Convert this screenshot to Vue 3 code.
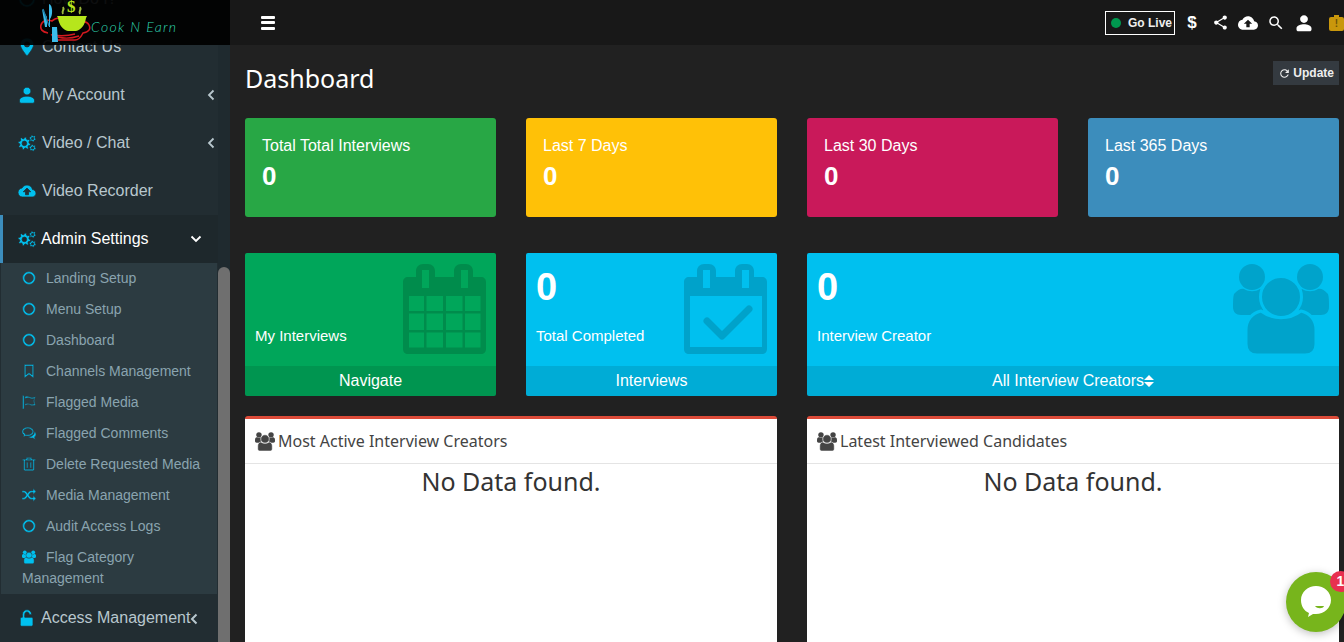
<template>
  <div class="page">
    <svg class="defs" width="0" height="0">
      <symbol id="users" viewBox="0 0 96 90">
        <circle cx="19" cy="13" r="13" stroke="none" />
        <circle cx="77" cy="13" r="13" stroke="none" />
        <path stroke="none" d="M1 30c4-5 8-6 10-5 5 3 11 3 16 0l8 2-6 24H8c-5 0-8-3-8-8 0-5 0-10 1-13z" />
        <path stroke="none" d="M95 30c-4-5-8-6-10-5-5 3-11 3-16 0l-8 2 6 24h21c5 0 8-3 8-8 0-5 0-10-1-13z" />
        <circle cx="48" cy="33" r="20.5" stroke-width="3" />
        <path stroke-width="3" d="M13 80V66c0-10 6-17 15-19 12 9 28 9 40 0 9 2 15 9 15 19v14c0 7-4 11-11 11H24c-7 0-11-4-11-11z" />
      </symbol>
    </svg>

    <aside class="sidebar">
      <div class="logo">
        <svg class="logo-art" width="52" height="45" viewBox="0 0 52 45">
          <path d="M8 33c-6-1-8-4-7-8s6-6 11-4c2-2 5-3 8-3M34 23c5-3 13-2 15 2s0 7-6 8c-2 4-5 7-8 7H18c-3 0-5-3-6-5 7 1 16 1 23-1" fill="none" stroke="#d3191f" stroke-width="1.6" />
          <path d="M18 37c7 2 15 1 21-1" fill="none" stroke="#d3191f" stroke-width="1.4" />
          <path d="M17 16h30l-1 2c-1 7-5 12-10 13h-8c-5-1-9-6-10-13z" fill="#b6e61c" />
          <text x="27" y="12" font-family="Liberation Serif, serif" font-size="17" font-weight="700" fill="#b6e61c">$</text>
          <path d="M23 14c-2-3 2-4 0-7M40 14c-2-3 2-4 0-7" fill="none" stroke="#9bb83a" stroke-width="2" />
          <path d="M2 9l5 8v10h-2zM9 4c4 1 4 12 1 15v8h-1zM12 27h5l1 15h-6z" fill="#3bbcea" />
          <path d="M3 9l6 17" stroke="#1d7fa8" stroke-width="1.4" />
        </svg>
        <span class="logo-text">Cook N Earn</span>
      </div>
      <nav class="nav">
        <div v-for="item in topMenu" :key="item.label" class="nav-item" :class="{ active: item.active }">
          <svg v-if="item.users" class="nav-icon"><use href="#users" /></svg>
          <svg v-else class="nav-icon" viewBox="0 0 24 24"><path :d="icons[item.icon]" fill-rule="evenodd" /></svg>
          <span>{{ item.label }}</span>
          <svg v-if="item.arrow === 'left'" class="chev" width="8" height="12" viewBox="0 0 8 12"><path d="M6.5 1.5L2 6l4.5 4.5" /></svg>
          <svg v-if="item.arrow === 'down'" class="chev down" width="12" height="8" viewBox="0 0 12 8"><path d="M1.5 1.5L6 6l4.5-4.5" /></svg>
        </div>
        <ul class="sub">
          <li v-for="s in subMenu" :key="s.label" class="sub-item">
            <svg v-if="s.icon === 'users'" class="sub-icon solid"><use href="#users" /></svg>
            <svg v-else class="sub-icon" :class="{ solid: s.solid }" viewBox="0 0 24 24"><path :d="icons[s.icon]" fill-rule="evenodd" /></svg>{{ s.label }}
          </li>
        </ul>
        <div class="nav-item access">
          <svg class="nav-icon" viewBox="0 0 24 24"><path :d="icons.unlock" /></svg>
          <span>Access Management</span>
          <svg class="chev after" width="8" height="12" viewBox="0 0 8 12"><path d="M6.5 1.5L2 6l4.5 4.5" /></svg>
        </div>
      </nav>
      <div class="scrollbar"><div class="thumb"></div></div>
    </aside>

    <main class="main">
      <header class="topbar">
        <button class="burger"><span></span><span></span><span></span></button>
        <div class="top-right">
          <div class="go-live"><i class="dot"></i>Go Live</div>
          <div class="top-icon dollar">$</div>
          <div class="top-icon"><svg width="17" height="17" viewBox="0 0 24 24"><path :d="icons.share" /></svg></div>
          <div class="top-icon"><svg width="20" height="20" viewBox="0 0 24 24"><path :d="icons.cloud" fill-rule="evenodd" /></svg></div>
          <div class="top-icon"><svg width="18" height="18" viewBox="0 0 24 24"><path :d="icons.search" /></svg></div>
          <div class="top-icon"><svg width="18" height="18" viewBox="0 0 24 24"><path :d="icons.person" /></svg></div>
          <div class="amber"><i>!</i></div>
        </div>
      </header>

      <section class="content">
        <div class="title-row">
          <h1>Dashboard</h1>
          <button class="update">
            <svg width="13" height="13" viewBox="0 0 24 24"><path :d="icons.refresh" /></svg>Update
          </button>
        </div>

        <div class="stats">
          <div v-for="c in stats" :key="c.label" class="stat" :style="{ background: c.color }">
            <div class="stat-label">{{ c.label }}</div>
            <div class="stat-num">0</div>
          </div>
        </div>

        <div class="boxes">
          <div class="box green">
            <div class="box-body">
              <h3 class="empty">&nbsp;</h3>
              <p>My Interviews</p>
              <svg class="ghost cal" width="84" height="90" viewBox="0 0 84 90"><path :d="calendarGrid" fill-rule="evenodd" /></svg>
            </div>
            <div class="box-foot">Navigate</div>
          </div>
          <div class="box blue">
            <div class="box-body">
              <h3>0</h3>
              <p>Total Completed</p>
              <svg class="ghost cal" width="84" height="90" viewBox="0 0 84 90">
                <path :d="calendarBlank" fill-rule="evenodd" />
                <path d="M23 57l15 15 27-27" fill="none" stroke="#000" stroke-width="7" stroke-linecap="round" stroke-linejoin="round" />
              </svg>
            </div>
            <div class="box-foot">Interviews</div>
          </div>
          <div class="box blue wide">
            <div class="box-body">
              <h3>0</h3>
              <p>Interview Creator</p>
              <svg class="ghost-users"><use href="#users" /></svg>
            </div>
            <div class="box-foot">All Interview Creators<svg class="sort" width="10" height="14" viewBox="0 0 10 14"><path d="M5 1l5 5H0zM0 8h10l-5 5z" /></svg></div>
          </div>
        </div>

        <div class="panels">
          <div v-for="p in panels" :key="p" class="panel">
            <div class="panel-head"><svg class="head-icon"><use href="#users" /></svg>{{ p }}</div>
            <div class="panel-body">No Data found.</div>
          </div>
        </div>
      </section>
    </main>

    <div class="chat">
      <svg width="32" height="34" viewBox="0 0 32 34">
        <path d="M16 1c8 0 15 6 15 14s-7 14-15 14c-1 0-2 0-3 0l-5 3 1-4C4 26 1 21 1 15 1 7 8 1 16 1z" fill="#fff" />
        <path d="M15 21h9c-1 3-7 3-9 0z" fill="#77b51c" />
      </svg>
      <span class="badge">1</span>
    </div>
  </div>
</template>

<script setup>
// builds a gear outline as one closed path, with a round hole in the middle
const gear = (cx, cy, r, teeth) => {
  const pts = []
  const n = teeth * 4
  for (let i = 0; i < n; i++) {
    const a = ((i + 0.5) / n) * Math.PI * 2
    const rad = i % 4 < 2 ? r : r * 0.74
    pts.push(`${(cx + Math.cos(a) * rad).toFixed(2)} ${(cy + Math.sin(a) * rad).toFixed(2)}`)
  }
  const h = r * 0.36
  return `M${pts.join('L')}zM${cx - h} ${cy}a${h} ${h} 0 1 0 ${h * 2} 0a${h} ${h} 0 1 0 ${-h * 2} 0z`
}

const cog = gear(8.5, 12.5, 8.5, 8) + gear(19.5, 6, 4.6, 6) + gear(19.5, 18.5, 4.6, 6)

const icons = {
  cog,
  person: 'M12 12c2.9 0 5.2-2.3 5.2-5.2S14.900 1.600 12 1.600 6.800 3.900 6.800 6.800 9.100 12 12 12zm0 1.500c-4 0-10 1.600-10 5.500v1.500c0 1.500 1 2.500 2.500 2.500h15c1.500 0 2.500-1 2.500-2.500V19c0-3.900-6-5.500-10-5.500z',
  pin: 'M12 0C6.500 0 3 4 3 8.500 3 14 12 24 12 24s9-10 9-15.500C21 4 17.500 0 12 0zm0 12a3.500 3.500 0 1 1 0-7 3.500 3.500 0 0 1 0 7z',
  cloud: 'M19.350 10.040C18.670 6.590 15.640 4 12 4 9.110 4 6.600 5.640 5.350 8.040 2.340 8.360 0 10.910 0 14c0 3.310 2.690 6 6 6h13c2.760 0 5-2.240 5-5 0-2.640-2.050-4.780-4.650-4.960zM14 13v4h-4v-4H7l5-5 5 5h-3z',
  share: 'M18 16.080c-.760 0-1.440.300-1.960.770L8.910 12.700c.050-.230.090-.460.090-.700s-.040-.470-.090-.700l7.050-4.110c.540.500 1.250.810 2.040.810 1.660 0 3-1.340 3-3s-1.340-3-3-3-3 1.340-3 3c0 .240.040.470.090.700L8.040 9.810C7.500 9.310 6.790 9 6 9c-1.660 0-3 1.340-3 3s1.340 3 3 3c.790 0 1.500-.310 2.040-.810l7.120 4.160c-.050.210-.080.430-.080.650 0 1.610 1.310 2.920 2.920 2.920 1.610 0 2.920-1.310 2.920-2.920s-1.310-2.920-2.920-2.920z',
  search: 'M15.500 14h-.790l-.280-.270C15.410 12.590 16 11.110 16 9.500 16 5.910 13.090 3 9.500 3S3 5.910 3 9.500 5.910 16 9.500 16c1.610 0 3.090-.590 4.230-1.570l.270.280v.790l5 4.990L20.490 19l-4.990-5zm-6 0C7.010 14 5 11.990 5 9.500S7.010 5 9.500 5 14 7.010 14 9.500 11.990 14 9.500 14z',
  refresh: 'M17.650 6.350C16.200 4.900 14.210 4 12 4c-4.420 0-7.990 3.580-7.990 8s3.570 8 7.990 8c3.730 0 6.840-2.550 7.730-6h-2.080c-.820 2.330-3.040 4-5.650 4-3.310 0-6-2.690-6-6s2.690-6 6-6c1.660 0 3.140.690 4.220 1.780L13 11h7V4l-2.350 2.350z',
  unlock: 'M18 11H9V7.500C9 5.600 10.300 4 12 4s3 1.600 3 3.500h3.200C18.200 3.800 15.500 1 12 1S5.800 3.800 5.800 7.500V11H5c-1 0-2 1-2 2v8c0 1 1 2 2 2h13c1 0 2-1 2-2v-8c0-1-1-2-2-2z',
  ring: 'M12 1a11 11 0 1 0 0 22 11 11 0 0 0 0-22zm0 3.500a7.500 7.500 0 1 1 0 15 7.500 7.500 0 0 1 0-15z',
  bookmark: 'M4 1h16v23l-8-6-8 6zm2.500 2.500v15.500l5.500-4 5.500 4V3.500z',
  flag: 'M1 1h2.500v23H1zM5 3c4-2 7 0 10 1s5 0 8-1l-2 7 2 7c-4 2-6 1-9 0s-5-1-9 1v-2.500c4-1.500 6-1 9 0s4 1 7 0l-1.500-5.500L21 6c-3 1-5 .500-7-.500s-5-1-9 .500z',
  comments: 'M10 2C4.500 2 0 5.300 0 9.500c0 2.400 1.500 4.500 3.500 6L2 19l4.500-2.200c1 .200 2.300.400 3.500.400 5.500 0 10-3.400 10-7.700S15.500 2 10 2zm0 2.200c4.500 0 7.800 2.500 7.800 5.300S14.500 15 10 15c-1.200 0-2.500-.200-3.700-.600l-1 .500.500-1.400C3.500 12.400 2.200 11 2.200 9.500 2.200 6.700 5.500 4.200 10 4.200zM21 9.500c2 1.300 3 3 3 5 0 1.700-1 3.300-2.500 4.400L23 23l-4.500-2.500c-3 .500-6-.300-8-2 4.500.200 11.500-2 10.500-9z',
  trash: 'M8 1h8l1 3h6v2.200h-2V21c0 1.500-1 2.500-2.500 2.500h-13C4 23.500 3 22.500 3 21V6.200H1V4h6zm1.200 3h5.600l-.400-1H9.600zM5.200 6.200V21h13.600V6.200zM8 9h2v10H8zm6 0h2v10h-2z',
  random: 'M19 1l5 5-5 5V7.500h-2.500c-1.500 0-2.500.800-3.500 2.200l-1.300 2.300 1.300 2.300c1 1.400 2 2.200 3.500 2.200H19V13l5 5-5 5v-3.500h-2.500c-3 0-4.800-1.400-6.300-3.600l-.700-1.200-.700 1.200c-1.500 2.200-3.300 3.600-6.300 3.600H0v-3h2.500c1.500 0 2.500-.800 3.500-2.200L7.300 12 6 9.700C5 8.300 4 7.500 2.500 7.500H0v-3h2.500c3 0 4.800 1.400 6.300 3.600l.700 1.200.700-1.200c1.500-2.200 3.300-3.600 6.300-3.600H19z'
}

const topMenu = [
  { label: 'How Do I?', icon: 'ring' },
  { label: 'Contact Us', icon: 'pin' },
  { label: 'My Account', icon: 'person', arrow: 'left' },
  { label: 'Video / Chat', icon: 'cog', arrow: 'left' },
  { label: 'Video Recorder', icon: 'cloud' },
  { label: 'Admin Settings', icon: 'cog', arrow: 'down', active: true }
]

const subMenu = [
  { label: 'Landing Setup', icon: 'ring' },
  { label: 'Menu Setup', icon: 'ring' },
  { label: 'Dashboard', icon: 'ring' },
  { label: 'Channels Management', icon: 'bookmark' },
  { label: 'Flagged Media', icon: 'flag' },
  { label: 'Flagged Comments', icon: 'comments' },
  { label: 'Delete Requested Media', icon: 'trash' },
  { label: 'Media Management', icon: 'random' },
  { label: 'Audit Access Logs', icon: 'ring' },
  { label: 'Flag Category Management', icon: 'users' }
]

const stats = [
  { label: 'Total Total Interviews', color: '#28a745' },
  { label: 'Last 7 Days', color: '#ffc107' },
  { label: 'Last 30 Days', color: '#c9195a' },
  { label: 'Last 365 Days', color: '#3c8dbc' }
]

const panels = ['Most Active Interview Creators', 'Latest Interviewed Candidates']

// calendar outline shared by the two ghost icons
const rect = (x, y, w, h) => `M${x} ${y}h${w}v${h}h${-w}z`
const calendarFrame =
  'M5 13h8V7c0-4 3-7 7-7h5c4 0 7 3 7 7v6h19V7c0-4 3-7 7-7h5c4 0 7 3 7 7v6h8c3 0 5 2 5 5v67c0 3-2 5-5 5H5c-3 0-5-2-5-5V18c0-3 2-5 5-5z' +
  rect(19, 6, 7, 18) + rect(58, 6, 7, 18)

const calendarBlank = calendarFrame + rect(6, 32, 72, 51)

const cols = [[6, 15], [23.5, 16.5], [43, 16.5], [62, 15.5]]
const rows = [[32, 15], [49.5, 16.5], [68.500, 15]]
const calendarGrid =
  calendarFrame + rows.map(([y, h]) => cols.map(([x, w]) => rect(x, y, w, h)).join('')).join('')
</script>

<style scoped>
.page {
  position: relative;
  display: flex;
  width: 1344px;
  height: 642px;
  overflow: hidden;
  font-family: "Liberation Sans", Arial, sans-serif;
  background: #212121;
}

.defs {
  position: absolute;
}

/* sidebar */
.sidebar {
  position: relative;
  display: flex;
  flex: 0 0 230px;
  overflow: hidden;
  background: #1f2a2f;
}

.logo {
  position: absolute;
  top: 0;
  left: 0;
  z-index: 2;
  display: flex;
  width: 230px;
  height: 45px;
  background: rgba(0, 0, 0, 0.93);
}

.logo-art {
  margin-left: 40px;
}

.logo-text {
  margin: 18px 0 0 -1px;
  font-family: Lato, sans-serif;
  font-size: 14px;
  font-style: italic;
  font-weight: 300;
  line-height: 18px;
  letter-spacing: 1.3px;
  color: #2fd6b0;
}

.nav {
  flex: 0 0 218px;
  margin-top: -25px;
  background: #222d32;
}

.nav-item {
  display: flex;
  align-items: center;
  height: 48px;
  padding-left: 18px;
  font-size: 16px;
  color: #b8c7ce;
  fill: #00c0ef;
  stroke: #222d32;
}

.nav-item.active {
  padding-left: 15px;
  border-left: 3px solid #3c8dbc;
  background: #1e282c;
  color: #fff;
}

.nav-item.access {
  padding-left: 18px;
}

.nav-icon {
  flex: 0 0 18px;
  width: 18px;
  height: 18px;
  margin-right: 6px;
}

.nav-item.active .nav-icon,
.nav-item.access .nav-icon {
  margin-right: 5px;
}

.chev {
  margin-left: auto;
  margin-right: 3px;
  fill: none;
  stroke: #b8c7ce;
  stroke-width: 1.8;
}

.chev.down {
  margin-right: 16px;
  stroke: #fff;
}

.chev.after {
  margin: 2px 0 0 0;
  stroke-width: 2;
}

.sub {
  margin: 0 1px;
  padding: 0;
  list-style: none;
  background: #2c3b41;
}

.sub-item {
  padding: 5px 15px 5px 21px;
  font-size: 14px;
  line-height: 21px;
  color: #8aa4af;
}

.sub-icon {
  width: 14px;
  height: 14px;
  margin-right: 10px;
  vertical-align: -2px;
  fill: #00c0ef;
  stroke: #2c3b41;
}

.scrollbar {
  display: flex;
  flex: 0 0 12px;
  padding-top: 267px;
}

.thumb {
  flex: 1;
  border-radius: 6px 6px 0 0;
  background: #6f6f6f;
}

/* top bar */
.main {
  flex: 1;
  min-width: 0;
}

.topbar {
  display: flex;
  align-items: center;
  justify-content: space-between;
  height: 45px;
  padding-left: 31px;
  background: #181818;
}

.burger {
  display: flex;
  flex-direction: column;
  gap: 2.500px;
  width: 14px;
  padding: 0;
  border: 0;
  background: none;
}

.burger span {
  height: 3px;
  border-radius: 1px;
  background: #fff;
}

.top-right {
  display: flex;
  align-items: center;
}

.go-live {
  display: flex;
  align-items: center;
  box-sizing: border-box;
  width: 70px;
  height: 24px;
  margin-right: 3px;
  padding-left: 5px;
  border: 1px solid #fff;
  font-size: 12px;
  font-weight: 700;
  color: #eee;
}

.dot {
  width: 10px;
  height: 10px;
  margin-right: 7px;
  border-radius: 50%;
  background: #00984f;
}

.top-icon {
  display: flex;
  align-items: center;
  justify-content: center;
  width: 28px;
  fill: #fff;
  color: #fff;
}

.dollar {
  font-size: 17px;
  font-weight: 700;
}

.amber {
  position: relative;
  display: flex;
  align-items: center;
  justify-content: center;
  width: 15px;
  height: 14px;
  margin: 2px 0 0 11px;
  border-radius: 2px;
  background: #c9970c;
}

.amber::before {
  content: "";
  position: absolute;
  top: -2px;
  left: 5px;
  width: 5px;
  height: 3px;
  background: #c9970c;
}

.amber i {
  font-size: 10px;
  font-style: normal;
  font-weight: 700;
  color: #6e5406;
}

/* content */
.content {
  padding: 0 5px 0 15px;
}

.title-row {
  display: flex;
  align-items: flex-start;
  justify-content: space-between;
  height: 73px;
  padding-top: 16px;
  box-sizing: border-box;
}

h1 {
  margin: 0;
  font-family: "Noto Sans", sans-serif;
  font-size: 25px;
  font-weight: 400;
  line-height: 34px;
  color: #fff;
}

.update {
  display: flex;
  align-items: center;
  gap: 2px;
  height: 24px;
  margin-top: 0;
  padding: 0 5px;
  border: 0;
  font-family: inherit;
  font-size: 12px;
  font-weight: 700;
  color: #eee;
  fill: #eee;
  background: #343a40;
}

.stats,
.boxes,
.panels {
  display: grid;
  grid-template-columns: repeat(4, 1fr);
  gap: 30px;
}

.stat {
  box-sizing: border-box;
  height: 99px;
  padding: 19px 17px;
  border-radius: 3px;
  color: #fff;
}

.stat-label {
  font-size: 16px;
  line-height: 18px;
}

.stat-num {
  margin-top: 4px;
  font-size: 26px;
  font-weight: 700;
  line-height: 34px;
}

.boxes {
  margin-top: 36px;
}

.box {
  display: flex;
  flex-direction: column;
  height: 143px;
  border-radius: 2px;
  overflow: hidden;
  color: #fff;
}

.box.green {
  background: #00a65a;
}

.box.blue {
  background: #00c0ef;
}

.box.wide {
  grid-column: span 2;
}

.box-body {
  position: relative;
  flex: 1;
  padding: 10px;
}

.box-body h3 {
  margin: 0 0 15px;
  font-size: 38px;
  font-weight: 700;
  line-height: 48px;
}

.box-body p {
  margin: 0;
  font-size: 15px;
  line-height: 20px;
}

.ghost {
  position: absolute;
  top: 11px;
  right: 9px;
  opacity: 0.15;
}

.ghost-users {
  position: absolute;
  top: 11px;
  right: 10px;
  width: 96px;
  height: 90px;
  fill: #00a3cb;
  stroke: #00c0ef;
}

.box-foot {
  display: flex;
  align-items: center;
  justify-content: center;
  height: 30px;
  font-size: 16px;
  background: rgba(0, 0, 0, 0.1);
  fill: #fff;
}

.panels {
  grid-template-columns: repeat(2, 1fr);
  margin-top: 20px;
}

.panel {
  height: 300px;
  border-top: 3px solid #dd4b39;
  border-radius: 3px;
  background: #fff;
  font-family: "Noto Sans", sans-serif;
}

.panel-head {
  display: flex;
  align-items: center;
  box-sizing: border-box;
  height: 45px;
  padding-left: 10px;
  border-bottom: 1px solid #e4e4e4;
  font-size: 16px;
  color: #444;
}

.head-icon {
  width: 20px;
  height: 19px;
  margin-right: 3px;
  fill: #444;
  stroke: #fff;
}

.panel-body {
  font-size: 25px;
  line-height: 34px;
  text-align: center;
  color: #333;
}

/* chat widget */
.chat {
  position: absolute;
  top: 572px;
  left: 1286px;
  display: flex;
  align-items: center;
  justify-content: center;
  width: 60px;
  height: 60px;
  border-radius: 50%;
  background: #77b51c;
  box-shadow: 0 2px 8px rgba(0, 0, 0, 0.25);
}

.badge {
  position: absolute;
  top: -1px;
  left: 44px;
  width: 21px;
  height: 21px;
  border-radius: 50%;
  background: #e8304f;
  font-size: 14px;
  font-weight: 700;
  line-height: 21px;
  text-align: center;
  color: #fff;
}
</style>

<style>
html,
body {
  margin: 0;
  overflow: hidden;
}
</style>
